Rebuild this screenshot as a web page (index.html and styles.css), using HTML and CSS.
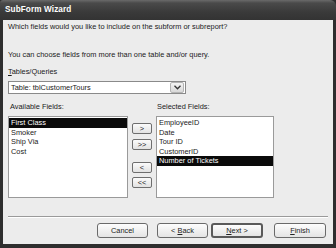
FILE: index.html
```html
<!DOCTYPE html>
<html lang="en">
<head>
    <meta charset="UTF-8">
    <title>SubForm Wizard</title>
    <link rel="stylesheet" href="styles.css">
</head>
<body>
    <div class="window">
        <div class="titlebar">SubForm Wizard</div>
        <div class="content">
            <p class="question">Which fields would you like to include on the subform or subreport?</p>
            <p class="hint">You can choose fields from more than one table and/or query.</p>

            <p class="label-tables"><u>T</u>ables/Queries</p>
            <div class="combo">
                <span class="combo-text">Table: tblCustomerTours</span>
                <span class="combo-btn">
                    <svg width="7" height="5" viewBox="0 0 7 5"><path d="M0.5 0.8 L3.5 3.8 L6.5 0.8" fill="none" stroke="#333" stroke-width="1.3"/></svg>
                </span>
            </div>

            <div class="fields">
                <p class="label-avail">Available Fields:</p>
                <span></span>
                <p class="label-sel">Selected Fields:</p>

                <ul class="listbox">
                    <li class="selected">First Class</li>
                    <li>Smoker</li>
                    <li>Ship Via</li>
                    <li>Cost</li>
                </ul>
                <div class="movers">
                    <button class="mover m1">&gt;</button>
                    <button class="mover m2">&gt;&gt;</button>
                    <button class="mover m3">&lt;</button>
                    <button class="mover m4">&lt;&lt;</button>
                </div>
                <ul class="listbox">
                    <li>EmployeeID</li>
                    <li>Date</li>
                    <li>Tour ID</li>
                    <li>CustomerID</li>
                    <li class="selected">Number of Tickets</li>
                </ul>
            </div>

            <div class="separator"></div>

            <div class="actions">
                <button class="btn btn-cancel">Cancel</button>
                <button class="btn btn-back">&lt; <u>B</u>ack</button>
                <button class="btn btn-next default"><u>N</u>ext &gt;</button>
                <button class="btn btn-finish"><u>F</u>inish</button>
            </div>
        </div>
    </div>
</body>
</html>
```

FILE: styles.css
```css
* {
    margin: 0;
    padding: 0;
    box-sizing: border-box;
}

body {
    font-family: 'Liberation Sans', Arial, sans-serif;
    font-size: 7.4px;
    color: #1a1a1a;
    background: #2e2e2e;
    width: 336px;
    height: 248px;
    overflow: hidden;
}

.window {
    width: 336px;
    height: 248px;
    display: flex;
    flex-direction: column;
    background: #2e2e2e;
}

.titlebar {
    height: 20px;
    flex-shrink: 0;
    padding: 5px 0 0 5px;
    color: #fff;
    font-weight: bold;
    font-size: 8.2px;
    letter-spacing: 0.1px;
    background: linear-gradient(180deg, #6a6a6a 0%, #4a4a4a 15%, #3a3a3a 60%, #333 100%);
    border-top-right-radius: 6px;
    border-top-left-radius: 3px;
}

.content {
    flex: 1;
    margin: 0 3px 4px 3px;
    background: #ececec;
    padding: 2px 0 0 5px;
    display: flex;
    flex-direction: column;
}

.question {
    height: 10px;
    line-height: 10px;
}

.hint {
    margin-top: 18px;
    height: 10px;
    line-height: 10px;
}

.label-tables {
    margin-top: 7px;
    height: 10px;
    line-height: 10px;
}

.combo {
    margin-top: 4px;
    width: 178px;
    height: 13px;
    background: #fff;
    border: 1px solid #8a8a8a;
    display: flex;
    align-items: center;
}

.combo-text {
    flex: 1;
    padding-left: 2px;
    line-height: 11px;
}

.combo-btn {
    width: 14px;
    height: 11px;
    margin-right: 1px;
    background: linear-gradient(180deg, #f4f4f4, #d8d8d8);
    border: 1px solid #b4b4b4;
    border-radius: 2px;
    display: flex;
    align-items: center;
    justify-content: center;
}

.fields {
    margin-top: 8px;
    display: grid;
    grid-template-columns: 120px 20px 118px;
    grid-template-rows: 14px 82px;
    column-gap: 4px;
}

.label-avail {
    padding-left: 2px;
    line-height: 10px;
}

.label-sel {
    padding-left: 1px;
    line-height: 10px;
}

.listbox {
    list-style: none;
    background: #fff;
    border: 1px solid #9a9a9a;
    padding-top: 1px;
}

.listbox li {
    height: 9.6px;
    line-height: 9.6px;
    padding-left: 2px;
    white-space: nowrap;
}

.listbox li.selected {
    background: #0a0a0a;
    color: #fff;
}

.movers {
    display: flex;
    flex-direction: column;
    padding-top: 7px;
}

.mover {
    width: 20px;
    height: 11px;
    font-family: 'Liberation Sans', Arial, sans-serif;
    font-size: 7.4px;
    line-height: 9px;
    color: #222;
    background: linear-gradient(180deg, #fbfbfb, #e2e2e2);
    border: 1px solid #6e6e6e;
    border-radius: 2px;
}

.m2 {
    margin-top: 5px;
}

.m3 {
    margin-top: 12px;
}

.m4 {
    margin-top: 4px;
}

.separator {
    margin-top: 18px;
    width: 320px;
    height: 2px;
    border-top: 1px solid #9a9a9a;
    border-bottom: 1px solid #fff;
}

.actions {
    margin-top: 5px;
    display: flex;
    padding-left: 89px;
}

.btn {
    width: 51px;
    height: 15px;
    font-family: 'Liberation Sans', Arial, sans-serif;
    font-size: 7.4px;
    color: #222;
    background: linear-gradient(180deg, #fdfdfd, #e4e4e4);
    border: 1px solid #6a6a6a;
    border-radius: 3px;
}

.btn-back {
    margin-left: 9px;
}

.btn-next {
    margin-left: 3px;
    width: 52px;
}

.btn-next.default {
    border: 2px solid #5a5a5a;
}

.btn-finish {
    margin-left: 11px;
    width: 52px;
}
```
